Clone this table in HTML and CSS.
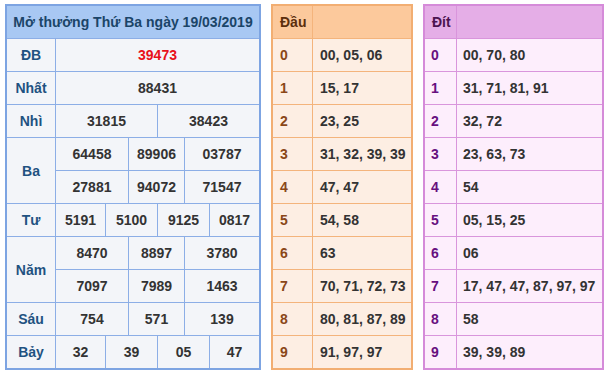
FILE: index.html
```html
<!DOCTYPE html>
<html lang="vi">
<head>
  <meta charset="UTF-8" />
  <title>Kết quả xổ số 19/03/2019</title>
  <link rel="stylesheet" href="styles.css">
</head>
<body>
  <div class="boards">
    <!-- ket qua -->
    <div class="result">
      <div class="title">Mở thưởng Thứ Ba ngày 19/03/2019</div>

      <div class="label">ĐB</div>
      <div class="num special full">39473</div>

      <div class="label">Nhất</div>
      <div class="num full">88431</div>

      <div class="label">Nhì</div>
      <div class="num half-a">31815</div>
      <div class="num half-b">38423</div>

      <div class="label tall">Ba</div>
      <div class="num third-a">64458</div>
      <div class="num third-b">89906</div>
      <div class="num third-c">03787</div>
      <div class="num third-a">27881</div>
      <div class="num third-b">94072</div>
      <div class="num third-c">71547</div>

      <div class="label">Tư</div>
      <div class="num">5191</div>
      <div class="num quarter">5100</div>
      <div class="num quarter">9125</div>
      <div class="num">0817</div>

      <div class="label tall">Năm</div>
      <div class="num third-a">8470</div>
      <div class="num third-b">8897</div>
      <div class="num third-c">3780</div>
      <div class="num third-a">7097</div>
      <div class="num third-b">7989</div>
      <div class="num third-c">1463</div>

      <div class="label">Sáu</div>
      <div class="num third-a">754</div>
      <div class="num third-b">571</div>
      <div class="num third-c">139</div>

      <div class="label">Bảy</div>
      <div class="num">32</div>
      <div class="num quarter">39</div>
      <div class="num quarter">05</div>
      <div class="num">47</div>
    </div>

    <!-- dau -->
    <div class="loto head">
      <div class="th">Đầu</div><div class="th"></div>
      <div class="key">0</div><div class="val">00, 05, 06</div>
      <div class="key">1</div><div class="val">15, 17</div>
      <div class="key">2</div><div class="val">23, 25</div>
      <div class="key">3</div><div class="val">31, 32, 39, 39</div>
      <div class="key">4</div><div class="val">47, 47</div>
      <div class="key">5</div><div class="val">54, 58</div>
      <div class="key">6</div><div class="val">63</div>
      <div class="key">7</div><div class="val">70, 71, 72, 73</div>
      <div class="key">8</div><div class="val">80, 81, 87, 89</div>
      <div class="key">9</div><div class="val">91, 97, 97</div>
    </div>

    <!-- dit -->
    <div class="loto tail">
      <div class="th">Đít</div><div class="th"></div>
      <div class="key">0</div><div class="val">00, 70, 80</div>
      <div class="key">1</div><div class="val">31, 71, 81, 91</div>
      <div class="key">2</div><div class="val">32, 72</div>
      <div class="key">3</div><div class="val">23, 63, 73</div>
      <div class="key">4</div><div class="val">54</div>
      <div class="key">5</div><div class="val">05, 15, 25</div>
      <div class="key">6</div><div class="val">06</div>
      <div class="key">7</div><div class="val">17, 47, 47, 87, 97, 97</div>
      <div class="key">8</div><div class="val">58</div>
      <div class="key">9</div><div class="val">39, 39, 89</div>
    </div>
  </div>
</body>
</html>
```

FILE: styles.css
```css
body {
  margin: 0;
  background: #ffffff;
  font-family: 'Liberation Sans', Arial, sans-serif;
  font-size: 14px;
  font-weight: bold;
  color: #333;
}

.boards {
  display: flex;
  align-items: flex-start;
  gap: 10px;
  padding: 4px 0 0 5px;
}

/* bang ket qua */
.result {
  display: grid;
  grid-template-columns: 48px 49px 22px 28px 26px 24px 49px;
  grid-auto-rows: 32px;
  gap: 1px;
  width: 252px;
  border: 2px solid #7da4e2;
  background: #8caee6;
}

.result > div {
  display: flex;
  align-items: center;
  justify-content: center;
  background: #f3f5f9;
}

.result .title {
  grid-column: 1 / -1;
  background: #a8c8f3;
  color: #1b4568;
  white-space: nowrap;
  font-size: 14px;
}

.result .label {
  grid-column: 1;
  color: #1f5281;
}

.result .tall {
  grid-row: span 2;
}

.result .num {
  color: #333;
}

.result .special {
  color: #e8101a;
}

.result .full { grid-column: 2 / 8; }
.result .half-a { grid-column: 2 / 5; }
.result .half-b { grid-column: 5 / 8; }
.result .third-a { grid-column: 2 / 4; }
.result .third-b { grid-column: 4 / 6; }
.result .third-c { grid-column: 6 / 8; }
.result .quarter { grid-column: span 2; }

/* bang loto */
.loto {
  display: grid;
  grid-auto-rows: 32px;
  gap: 1px;
}

.loto > div {
  display: flex;
  align-items: center;
  padding-left: 7px;
}

.loto .val {
  color: #333;
}

.head {
  grid-template-columns: 39px 98px;
  border: 2px solid #f2ae72;
  background: #f4b47c;
}

.head .th { background: #fcc99c; color: #5c2f0d; }
.head .key { background: #fdeee3; color: #8a4718; }
.head .val { background: #fdeee3; }

.tail {
  grid-template-columns: 31px 145px;
  border: 2px solid #d58bd9;
  background: #d995dc;
}

.tail .th { background: #e5aee7; color: #4c1450; }
.tail .key { background: #fdeefc; color: #67107f; padding-left: 6px; }
.tail .val { background: #fdeefc; padding-left: 6px; }
```
